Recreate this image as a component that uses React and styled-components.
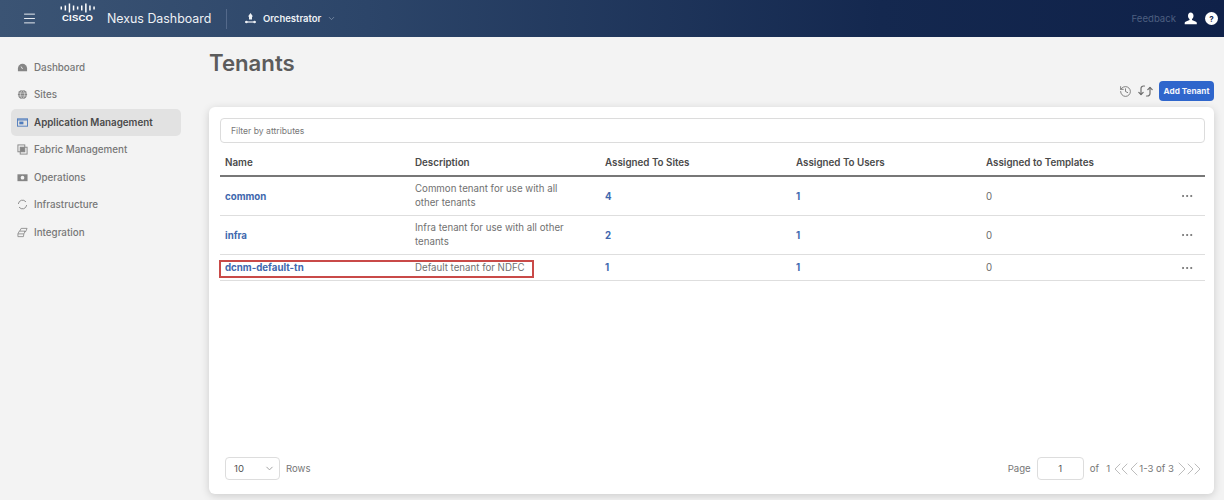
import React from "react";
import styled, { createGlobalStyle } from "styled-components";
import { ChevronDown, ChevronLeft, ChevronRight, ChevronsLeft, ChevronsRight, Ellipsis, History, Menu } from "lucide-react";

const GlobalStyle = createGlobalStyle`
  html, body { margin: 0; padding: 0; background: #f3f3f3; }
  body { font-family: Inter, "Liberation Sans", sans-serif; }
  * { box-sizing: border-box; }
`;

const navItems = [
  { label: "Dashboard", icon: "dashboard" },
  { label: "Sites", icon: "sites" },
  { label: "Application Management", icon: "app", active: true },
  { label: "Fabric Management", icon: "fabric" },
  { label: "Operations", icon: "ops" },
  { label: "Infrastructure", icon: "infra" },
  { label: "Integration", icon: "integration" },
];

const tenants = [
  { name: "common", desc: "Common tenant for use with all other tenants", sites: 4, users: 1, templates: 0 },
  { name: "infra", desc: "Infra tenant for use with all other tenants", sites: 2, users: 1, templates: 0 },
  { name: "dcnm-default-tn", desc: "Default tenant for NDFC", sites: 1, users: 1, templates: 0, marked: true },
];

function NavIcon({ type, active }) {
  const c = active ? "#4f7cbd" : "#858585";
  return (
    <svg width="11" height="11" viewBox="0 0 12 12" fill="none">
      {type === "dashboard" && (
        <>
          <path d="M1 10V7a5 5 0 0 1 10 0v3z" fill={c} />
          <path d="M6 7.5 4.5 5" stroke="#f3f3f3" strokeWidth="1" />
        </>
      )}
      {type === "sites" && (
        <>
          <circle cx="6" cy="6" r="5" fill={c} />
          <path d="M1 4.5h10M1 7.5h10M6 1c-3 3-3 7 0 10M6 1c3 3 3 7 0 10" stroke="#f3f3f3" strokeWidth=".6" />
        </>
      )}
      {type === "app" && (
        <>
          <rect x=".5" y="2" width="11" height="8" stroke={c} strokeWidth="1" />
          <rect x="2.5" y="5" width="4.5" height="3" fill={c} />
          <path d="M.5 3.2h11" stroke={c} strokeWidth="1.2" />
        </>
      )}
      {type === "fabric" && (
        <>
          <rect x="1" y="1" width="7.5" height="7.5" stroke={c} strokeWidth="1" />
          <rect x="3.5" y="3.5" width="7.5" height="7.5" stroke={c} strokeWidth="1" />
          <rect x="3.5" y="3.5" width="5" height="5" fill={c} />
        </>
      )}
      {type === "ops" && (
        <>
          <rect x=".5" y="2.5" width="11" height="7.5" fill={c} />
          <circle cx="6" cy="6.2" r="2" fill="#f3f3f3" />
        </>
      )}
      {type === "infra" && (
        <path d="M1.5 5a4.6 4.6 0 0 1 8-2.2M10.5 7a4.6 4.6 0 0 1-8 2.2" stroke={c} strokeWidth="1" strokeLinecap="round" />
      )}
      {type === "integration" && (
        <>
          <path d="M3 4.5 4.5 1.5H11L9.5 5H8" stroke={c} strokeWidth=".9" />
          <path d="M1 7.5 2.5 4.5H9L7.5 7.5M1 7.5V10.5H7L7.5 7.5z" stroke={c} strokeWidth=".9" />
        </>
      )}
    </svg>
  );
}

function CiscoBars() {
  const bars = [3, 5, 9, 5, 3, 5, 9, 5, 3];
  return (
    <svg width="35" height="10" viewBox="0 0 35 10">
      {bars.map((h, i) => (
        <rect key={i} x={i * 4.1 + 0.5} y={(10 - h) / 2} width="1.5" height={h} fill="#fff" />
      ))}
    </svg>
  );
}

function OrchestratorIcon() {
  return (
    <svg width="13" height="13" viewBox="0 0 13 13" fill="none">
      <path d="M6.5 1 9 4.5H8v3H5v-3H4z" fill="#eef1f5" />
      <path d="M1 10h11" stroke="#eef1f5" strokeWidth="1.2" />
      <circle cx="2.5" cy="10" r="1.2" fill="#eef1f5" />
      <circle cx="10.5" cy="10" r="1.2" fill="#eef1f5" />
    </svg>
  );
}

function PersonIcon() {
  return (
    <svg width="13" height="13" viewBox="0 0 13 13" fill="#fff">
      <path d="M6.5 0.5c1.9 0 3 1.4 3 3.2 0 1.4-.6 2.6-1.5 3.2v1l4 1.8c.5.3.8.7.8 1.3v1.2H.7V11c0-.6.3-1 .8-1.3l4-1.8v-1C4.6 6.3 4 5.1 4 3.7c0-1.8 1.1-3.2 2.5-3.2z" />
    </svg>
  );
}

function SyncIcon() {
  return (
    <svg width="15" height="14" viewBox="0 0 15 14" fill="none" stroke="#6f6f6f" strokeWidth="1.2" strokeLinecap="round" strokeLinejoin="round">
      <path d="M3 10.5V4.5A2.5 2.5 0 0 1 5.5 2H6.5" />
      <path d="M.8 8.3 3 10.5l2.2-2.2" />
      <path d="M12 3.5V9.5A2.5 2.5 0 0 1 9.5 12H8.5" />
      <path d="M9.8 5.7 12 3.5l2.2 2.2" />
    </svg>
  );
}

export default function App() {
  return (
    <Page>
      <GlobalStyle />
      <TopBar>
        <BurgerSlot>
          <Menu size={15} color="#e6eaf0" strokeWidth={1.6} />
        </BurgerSlot>
        <Logo>
          <CiscoBars />
          <LogoWord>CISCO</LogoWord>
        </Logo>
        <ProductName>Nexus Dashboard</ProductName>
        <BarDivider />
        <OrchestratorIcon />
        <ServiceName>Orchestrator</ServiceName>
        <ChevronDown size={9} color="#8496ae" />
        <TopRight>
          <Feedback>Feedback</Feedback>
          <PersonIcon />
          <HelpDot>?</HelpDot>
        </TopRight>
      </TopBar>
      <Body>
        <Sidebar>
          {navItems.map((item) => (
            <NavItem key={item.label} $active={item.active}>
              <NavIcon type={item.icon} active={item.active} />
              {item.label}
            </NavItem>
          ))}
        </Sidebar>
        <Main>
          <Title>Tenants</Title>
          <Toolbar>
            <History size={13} color="#6f6f6f" strokeWidth={1.6} />
            <SyncIcon />
            <AddButton>Add Tenant</AddButton>
          </Toolbar>
          <Card>
            <FilterBox>Filter by attributes</FilterBox>
            <HeadRow>
              <HeadCell>Name</HeadCell>
              <HeadCell>Description</HeadCell>
              <HeadCell>Assigned To Sites</HeadCell>
              <HeadCell>Assigned To Users</HeadCell>
              <HeadCell>Assigned to Templates</HeadCell>
            </HeadRow>
            {tenants.map((t) => (
              <Row key={t.name} $short={t.marked}>
                {t.marked && <Marker />}
                <NameCell>{t.name}</NameCell>
                <DescCell>{t.desc}</DescCell>
                <CountCell>{t.sites}</CountCell>
                <CountCell>{t.users}</CountCell>
                <PlainCell>{t.templates}</PlainCell>
                <ActionCell>
                  <Ellipsis size={14} color="#666" strokeWidth={1.6} />
                </ActionCell>
              </Row>
            ))}
            <Footer>
              <RowsPicker>
                <RowsSelect>
                  10
                  <ChevronDown size={11} color="#9a9a9a" />
                </RowsSelect>
                Rows
              </RowsPicker>
              <Pager>
                Page
                <PageInput>1</PageInput>
                <OfText>of&nbsp;&nbsp;1</OfText>
                <PagerArrow $w={12} $gap={3}>
                  <ChevronsLeft size={24} color="#bdbdbd" strokeWidth={1} />
                </PagerArrow>
                <PagerArrow $w={7} $gap={2}>
                  <ChevronLeft size={24} color="#bdbdbd" strokeWidth={1} />
                </PagerArrow>
                <RangeText>1-3 of 3</RangeText>
                <PagerArrow $w={7} $gap={3}>
                  <ChevronRight size={24} color="#bdbdbd" strokeWidth={1} />
                </PagerArrow>
                <PagerArrow $w={12} $gap={0}>
                  <ChevronsRight size={24} color="#bdbdbd" strokeWidth={1} />
                </PagerArrow>
              </Pager>
            </Footer>
          </Card>
        </Main>
      </Body>
    </Page>
  );
}

const Page = styled.div`
  width: 1224px;
  height: 500px;
  overflow: hidden;
  display: flex;
  flex-direction: column;
  background: #f3f3f3;
`;

const TopBar = styled.header`
  height: 37px;
  flex: none;
  display: flex;
  align-items: center;
  padding-right: 6px;
  background: linear-gradient(90deg, #3b5474 0%, #2c4569 30%, #14284f 72%, #0f2149 100%);
  color: #fff;
`;

const BurgerSlot = styled.div`
  width: 60px;
  padding-left: 22px;
  display: flex;
`;

const Logo = styled.div`
  width: 47px;
  display: flex;
  flex-direction: column;
  align-items: flex-start;
  margin-top: -12px;
`;

const LogoWord = styled.div`
  font-family: "Liberation Sans", sans-serif;
  font-size: 9.5px;
  font-weight: 700;
  letter-spacing: 0.2px;
  line-height: 10px;
  margin-left: 2px;
`;

const ProductName = styled.div`
  font-size: 12.4px;
  color: #eef1f5;
  width: 119px;
`;

const BarDivider = styled.div`
  width: 1px;
  height: 20px;
  background: #54698a;
  margin-right: 17px;
`;

const ServiceName = styled.div`
  font-size: 9.5px;
  font-weight: 600;
  color: #eef1f5;
  margin: 0 6px 0 6px;
`;

const TopRight = styled.div`
  margin-left: auto;
  display: flex;
  align-items: center;
  gap: 8px;
`;

const Feedback = styled.span`
  font-size: 9.6px;
  color: #4d5f80;
`;

const HelpDot = styled.span`
  width: 13px;
  height: 13px;
  border-radius: 50%;
  background: #fff;
  color: #14284f;
  font-size: 8px;
  font-weight: 700;
  display: flex;
  align-items: center;
  justify-content: center;
`;

const Body = styled.div`
  flex: 1;
  display: flex;
  min-height: 0;
`;

const Sidebar = styled.nav`
  width: 209px;
  flex: none;
  padding: 17px 28px 0 11px;
  display: flex;
  flex-direction: column;
  gap: 0.45px;
`;

const NavItem = styled.div`
  height: 27px;
  display: flex;
  align-items: center;
  gap: 6px;
  padding-left: 6px;
  border-radius: 5px;
  font-size: 9.8px;
  font-weight: ${(p) => (p.$active ? 600 : 500)};
  color: ${(p) => (p.$active ? "#4a4a4a" : "#777")};
  background: ${(p) => (p.$active ? "#e2e2e2" : "transparent")};
`;

const Main = styled.main`
  flex: 1;
  display: flex;
  flex-direction: column;
  padding: 11px 10px 6px 0;
  min-width: 0;
`;

const Title = styled.h1`
  margin: 0;
  height: 30px;
  font-size: 22.2px;
  line-height: 30px;
  font-weight: 600;
  color: #5c5c5c;
`;

const Toolbar = styled.div`
  height: 20px;
  margin-top: 3px;
  display: flex;
  align-items: center;
  justify-content: flex-end;
  gap: 6px;
`;

const AddButton = styled.button`
  width: 55px;
  height: 20px;
  border: 0;
  padding: 0;
  border-radius: 4px;
  background: #2f66cc;
  color: #f2f5fb;
  font-family: inherit;
  font-size: 8.2px;
  font-weight: 700;
`;

const Card = styled.section`
  flex: 1;
  margin-top: 6px;
  padding: 11px 9px 14px 11px;
  display: flex;
  flex-direction: column;
  background: #fff;
  border-radius: 6px;
  box-shadow: 0 2px 8px rgba(0, 0, 0, 0.16);
  min-height: 0;
`;

const FilterBox = styled.div`
  height: 25px;
  flex: none;
  display: flex;
  align-items: center;
  padding-left: 10px;
  border: 1px solid #dcdcdc;
  border-radius: 4px;
  font-size: 8.6px;
  color: #777;
`;

const columns = "190px 190px 191px 190px 1fr 38px";

const HeadRow = styled.div`
  height: 34px;
  flex: none;
  display: grid;
  grid-template-columns: ${columns};
  align-items: center;
  padding-left: 5px;
  padding-top: 7px;
  border-bottom: 2px solid #777;
`;

const HeadCell = styled.div`
  font-size: 9.8px;
  font-weight: 600;
  color: #4a4a4a;
`;

const Row = styled.div`
  position: relative;
  height: ${(p) => (p.$short ? "26px" : "39px")};
  flex: none;
  display: grid;
  grid-template-columns: ${columns};
  align-items: center;
  padding-left: 5px;
  border-bottom: 1px solid #dedede;
`;

const Marker = styled.div`
  position: absolute;
  left: -1px;
  top: 5px;
  width: 315px;
  height: 18px;
  border: 2px solid #c94a48;
  pointer-events: none;
`;

const NameCell = styled.div`
  font-size: 9.7px;
  font-weight: 700;
  color: #4168ae;
`;

const DescCell = styled.div`
  font-size: 9.7px;
  line-height: 14px;
  color: #717171;
  width: 160px;
`;

const CountCell = styled.div`
  font-size: 9.7px;
  font-weight: 700;
  color: #4168ae;
`;

const PlainCell = styled.div`
  font-size: 9.7px;
  color: #6c6c6c;
`;

const ActionCell = styled.div`
  display: flex;
  padding-left: 13px;
`;

const Footer = styled.div`
  margin-top: auto;
  display: flex;
  align-items: center;
  justify-content: space-between;
  padding: 0 5px;
  font-size: 9.6px;
  color: #777;
`;

const RowsPicker = styled.div`
  display: flex;
  align-items: center;
  gap: 6px;
`;

const RowsSelect = styled.div`
  width: 55px;
  height: 23px;
  display: flex;
  align-items: center;
  justify-content: space-between;
  padding: 0 4px 0 8px;
  border: 1px solid #ddd;
  border-radius: 4px;
  color: #555;
`;

const Pager = styled.div`
  display: flex;
  align-items: center;
`;

const PageInput = styled.div`
  width: 47px;
  height: 23px;
  margin: 0 6px;
  display: flex;
  align-items: center;
  justify-content: center;
  border: 1px solid #ddd;
  border-radius: 4px;
  color: #555;
`;

const OfText = styled.span`
  margin-right: 5px;
  word-spacing: 1px;
`;

const PagerArrow = styled.span`
  width: ${(p) => p.$w}px;
  height: 14px;
  margin-right: ${(p) => p.$gap}px;
  display: flex;
  align-items: center;
  justify-content: center;
  svg {
    flex: none;
  }
`;

const RangeText = styled.span`
  color: #777;
  margin-right: 4px;
`;
